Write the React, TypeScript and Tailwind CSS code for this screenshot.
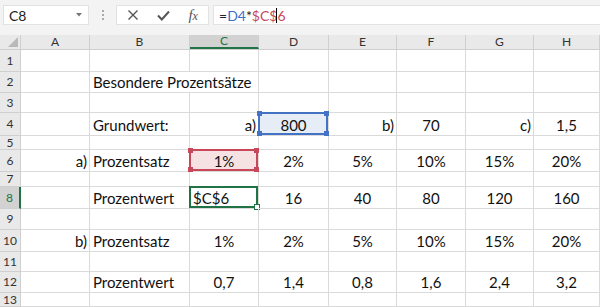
import React from "react";

type Cell = { t?: string; a?: "l" | "c" | "r"; sel?: "blue" | "red" | "green"; ov?: boolean };

const colW = [69, 100, 69, 70, 68, 69, 68, 66];
const colNames = ["A", "B", "C", "D", "E", "F", "G", "H"];
const rowH = [22, 21, 20, 23, 14, 22, 15, 22, 21, 22, 20, 21, 14];

const pr = (a: string, b: string, c: string, d: string, e: string, f: string): Cell[] =>
  [a, b, c, d, e, f].map((t) => ({ t, a: "c" as const }));

const data: Record<number, Cell[]> = {
  2: [{}, { t: "Besondere Prozentsätze", a: "l", ov: true }],
  4: [
    {},
    { t: "Grundwert:", a: "l" },
    { t: "a)", a: "r" },
    { t: "800", a: "c", sel: "blue" },
    { t: "b)", a: "r" },
    { t: "70", a: "c" },
    { t: "c)", a: "r" },
    { t: "1,5", a: "c" },
  ],
  6: [
    { t: "a)", a: "r" },
    { t: "Prozentsatz", a: "l" },
    { t: "1%", a: "c", sel: "red" },
    ...pr("2%", "5%", "10%", "15%", "20%", "").slice(0, 5),
  ],
  8: [
    {},
    { t: "Prozentwert", a: "l" },
    { t: "$C$6", a: "l", sel: "green" },
    ...pr("16", "40", "80", "120", "160", "").slice(0, 5),
  ],
  10: [
    { t: "b)", a: "r" },
    { t: "Prozentsatz", a: "l" },
    ...pr("1%", "2%", "5%", "10%", "15%", "20%"),
  ],
  12: [
    {},
    { t: "Prozentwert", a: "l" },
    ...pr("0,7", "1,4", "0,8", "1,6", "2,4", "3,2"),
  ],
};

function Handles({ color }: { color: string }) {
  const s = "absolute w-[5px] h-[5px]";
  return (
    <>
      <div className={`${s} -left-[3px] -top-[3px] ${color}`} />
      <div className={`${s} -right-[3px] -top-[3px] ${color}`} />
      <div className={`${s} -left-[3px] -bottom-[3px] ${color}`} />
      <div className={`${s} -right-[3px] -bottom-[3px] ${color}`} />
    </>
  );
}

function Selection({ kind }: { kind: "blue" | "red" | "green" }) {
  if (kind === "blue")
    return (
      <div className="absolute -left-[1px] -top-[1px] right-0 bottom-0 border-2 border-[#4472c4] bg-[#dce6f4]/70 pointer-events-none z-0">
        <Handles color="bg-[#4472c4]" />
      </div>
    );
  if (kind === "red")
    return (
      <div className="absolute -left-[1px] -top-[1px] right-0 bottom-0 border-2 border-[#c8485a] bg-[#f6e1e3] pointer-events-none z-0">
        <Handles color="bg-[#c8485a]" />
      </div>
    );
  return (
    <div className="absolute -left-[1px] -top-[1px] right-0 bottom-0 border-2 border-[#217346] pointer-events-none z-0">
      <div className="absolute -right-[4px] -bottom-[4px] w-[6px] h-[6px] bg-white border border-[#217346]" />
    </div>
  );
}

export default function App() {
  const font = { fontFamily: "Lato, 'Open Sans', sans-serif" };
  return (
    <div className="w-[600px] h-[307px] overflow-hidden bg-white select-none" style={font}>
      {/* Formula bar */}
      <div className="h-[35px] bg-[#f3f3f3] flex items-start pt-[5px] pl-[3px]">
        <div className="w-[86px] h-[20px] bg-white border border-[#e2e2e2] flex items-center justify-between pl-[5px] pr-[6px]">
          <span className="text-[14px] text-[#222]">C8</span>
          <svg width="6" height="4" viewBox="0 0 6 4">
            <path d="M0 0 L6 0 L3 3.5 Z" fill="#777" />
          </svg>
        </div>
        <div className="w-[27px] h-[20px] flex flex-col items-center justify-center gap-[2px]">
          <div className="w-[2px] h-[2px] bg-[#aaa]" />
          <div className="w-[2px] h-[2px] bg-[#aaa]" />
          <div className="w-[2px] h-[2px] bg-[#aaa]" />
        </div>
        <div className="w-[93px] h-[20px] bg-white border border-[#e2e2e2] flex items-center">
          <div className="w-[32px] flex justify-center">
            <svg width="12" height="12" viewBox="0 0 12 12">
              <path d="M1.5 1.5 L10.5 10.5 M10.5 1.5 L1.5 10.5" stroke="#555" strokeWidth="1.4" />
            </svg>
          </div>
          <div className="w-[30px] flex justify-center">
            <svg width="13" height="11" viewBox="0 0 13 11">
              <path d="M1 5.5 L4.8 9.5 L12 1.5" stroke="#555" strokeWidth="2" fill="none" />
            </svg>
          </div>
          <div className="w-[30px] flex justify-center">
            <span className="text-[15px] italic text-[#555]" style={{ fontFamily: "'Liberation Serif', serif" }}>
              f<span className="text-[12px]">x</span>
            </span>
          </div>
        </div>
        <div className="flex-1 ml-[4px] h-[20px] bg-white border border-[#e2e2e2] border-r-0 flex items-center pl-[5px] text-[14px] text-[#222]">
          <span>=</span>
          <span className="text-[#3c6fc7]">D4</span>
          <span>*</span>
          <span className="text-[#c8485a]">$C$</span>
          <span className="inline-block w-[1px] h-[15px] bg-black -ml-[1px]" />
          <span className="text-[#c8485a]">6</span>
        </div>
      </div>

      {/* Column headers */}
      <div className="flex h-[15px] bg-[#e9e9e9] border-b border-[#cfcfcf]">
        <div className="w-[21px] h-full border-r border-[#cfcfcf] relative">
          <svg className="absolute right-[2px] bottom-[2px]" width="10" height="10" viewBox="0 0 10 10">
            <path d="M10 0 L10 10 L0 10 Z" fill="#b9b9b9" />
          </svg>
        </div>
        {colNames.map((c, i) => (
          <div
            key={c}
            style={{ width: colW[i] }}
            className={
              c === "C"
                ? "h-full flex items-center justify-center text-[12px] text-[#217346] bg-[#d2d2d2] border-r border-[#cfcfcf] border-b-2 border-b-[#217346]"
                : "h-full flex items-center justify-center text-[12px] text-[#333] border-r border-[#cfcfcf]"
            }
          >
            {c}
          </div>
        ))}
      </div>

      {/* Rows */}
      {rowH.map((h, ri) => {
        const r = ri + 1;
        const cells = data[r] || [];
        const active = r === 8;
        return (
          <div key={r} className="flex" style={{ height: h }}>
            <div
              className={
                active
                  ? "w-[21px] shrink-0 flex items-center justify-center text-[12px] text-[#217346] bg-[#d2d2d2] border-b border-[#cfcfcf] border-r-2 border-r-[#217346]"
                  : "w-[21px] shrink-0 flex items-center justify-center text-[12px] text-[#333] bg-[#e9e9e9] border-b border-[#cfcfcf] border-r border-r-[#cfcfcf]"
              }
            >
              {r}
            </div>
            {colW.map((w, ci) => {
              const cell = cells[ci] || {};
              const hideR = r === 2 && ci === 1;
              return (
                <div
                  key={ci}
                  style={{ width: w }}
                  className={`relative shrink-0 border-b border-[#dadada] ${hideR ? "" : "border-r"} ${cell.ov ? "overflow-visible z-10" : ""}`}
                >
                  {cell.sel && <Selection kind={cell.sel} />}
                  {cell.t && (
                    <div
                      className={`absolute inset-0 flex items-end pb-[1px] text-[15px] leading-[18px] text-[#111] whitespace-nowrap z-10 ${
                        cell.a === "l" ? "justify-start pl-[3px]" : cell.a === "r" ? "justify-end pr-[2px]" : "justify-center"
                      }`}
                    >
                      {cell.t}
                    </div>
                  )}
                </div>
              );
            })}
          </div>
        );
      })}
    </div>
  );
}
